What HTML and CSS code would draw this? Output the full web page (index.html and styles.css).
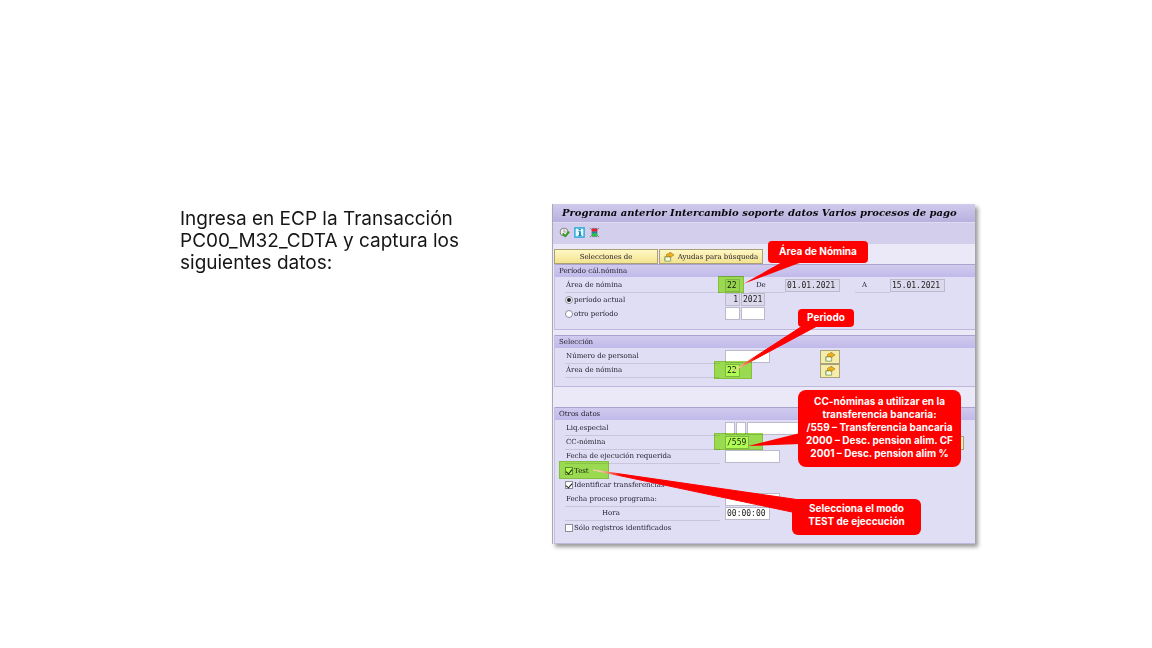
FILE: index.html
```html
<!DOCTYPE html>
<html lang="es">
<head>
<meta charset="utf-8">
<title>Transacción PC00_M32_CDTA</title>
<link rel="stylesheet" href="styles.css">
</head>
<body>
<svg class="defs" width="0" height="0" aria-hidden="true">
  <symbol id="multi" viewBox="0 0 12 12">
    <path d="M1 5.500h7V11H1z" fill="#f4fbe8" stroke="#7f9a55"/>
    <path d="M1 10V7l2-2h3" fill="none" stroke="#74b34a"/>
    <path d="M3 6V3l1-1h3V0l5 3.500L7 7V5H5v1z" fill="#f2b21c" stroke="#9c7420" stroke-width=".7"/>
  </symbol>
</svg>
<main class="slide">
  <p class="intro">Ingresa en ECP la Transacción PC00_M32_CDTA y captura los siguientes datos:</p>
  <section class="panel">
    <h1 class="title">Programa anterior Intercambio soporte datos Varios procesos de pago</h1>
    <div class="toolbar">
      <button class="tool" type="button" aria-label="Ejecutar"><svg viewBox="0 0 12 12"><circle cx="5.500" cy="5.500" r="4.300" fill="#f1f1ee" stroke="#77777b"/><path d="M5.500 2.500v3h3" fill="none" stroke="#88888a" stroke-width=".8"/><path d="M4 7l3 3 4-5" fill="none" stroke="#2f9a24" stroke-width="2"/></svg></button>
      <button class="tool" type="button" aria-label="Información"><svg viewBox="0 0 12 12"><rect x="1" y="1" width="10" height="10" fill="#e9fbff" stroke="#21a6d6" stroke-width="1.500"/><path d="M5 2h2.500v1.500H5zM4.500 4.500h3V9h1v1h-4V9h1V5.500h-1z" fill="#1689c0"/></svg></button>
      <button class="tool" type="button" aria-label="Estado"><svg viewBox="0 0 12 12"><path d="M1 1l2 2M11 1L9 3M1 11l2-2M11 11L9 9" stroke="#77727f"/><path d="M3 1h6v10H3z" fill="#8a8593"/><path d="M3 2h6v3H3z" fill="#f01c2b"/><path d="M3 5h6v2H3z" fill="#1c82a8"/><path d="M3 7h6v3H3z" fill="#20c545"/></svg></button>
    </div>
    <div class="actions">
      <button class="action" type="button">Selecciones de</button>
      <button class="action" type="button"><svg class="glyph"><use href="#multi"/></svg>Ayudas para búsqueda</button>
    </div>

    <section class="group">
      <h2 class="heading">Período cál.nómina</h2>
      <div class="row">
        <label class="label" for="area">Área de nómina</label>
        <div class="fields periods">
          <input class="field two" id="area" value="22" readonly>
          <label class="ruled" for="from">De</label>
          <input class="field date" id="from" value="01.01.2021" readonly>
          <label class="ruled" for="to">A</label>
          <input class="field date" id="to" value="15.01.2021" readonly>
        </div>
      </div>
      <div class="row">
        <label class="choice"><input type="radio" name="period" checked>período actual</label>
        <div class="fields"><input class="field two right" aria-label="Período" value="1" readonly><input class="field year" aria-label="Año" value="2021" readonly></div>
      </div>
      <div class="row">
        <label class="choice"><input type="radio" name="period">otro período</label>
        <div class="fields"><input class="field two" aria-label="Otro período"><input class="field year" aria-label="Otro año"></div>
      </div>
    </section>

    <section class="group">
      <h2 class="heading">Selección</h2>
      <div class="row">
        <label class="label" for="person">Número de personal</label>
        <div class="fields"><input class="field time" id="person"></div>
        <button class="more" type="button" aria-label="Selección múltiple de personal"><svg class="glyph"><use href="#multi"/></svg></button>
      </div>
      <div class="row">
        <label class="label" for="area2">Área de nómina</label>
        <div class="fields"><input class="field two" id="area2" value="22"></div>
        <button class="more" type="button" aria-label="Selección múltiple de área"><svg class="glyph"><use href="#multi"/></svg></button>
      </div>
    </section>

    <section class="group last">
      <h2 class="heading">Otros datos</h2>
      <div class="row">
        <label class="label" for="special">Liq.especial</label>
        <div class="fields"><input class="field one" id="special"><input class="field one" aria-label="Identificador"><input class="field long" aria-label="Fecha especial"></div>
      </div>
      <div class="row">
        <label class="label" for="cc">CC-nómina</label>
        <div class="fields"><input class="field year" id="cc" value="/559"></div>
        <button class="more end" type="button" aria-label="Selección múltiple de CC-nómina"><svg class="glyph"><use href="#multi"/></svg></button>
      </div>
      <div class="row">
        <label class="label" for="due">Fecha de ejecución requerida</label>
        <div class="fields"><input class="field date" id="due"></div>
      </div>
      <div class="checks">
        <label class="choice"><input type="checkbox" checked>Test</label>
        <label class="choice"><input type="checkbox" checked>Identificar transferencias</label>
      </div>
      <div class="row">
        <label class="label" for="run">Fecha proceso programa:</label>
        <div class="fields"><input class="field date" id="run"></div>
      </div>
      <div class="row">
        <label class="label indent" for="hour">Hora</label>
        <div class="fields"><input class="field time" id="hour" value="00:00:00"></div>
      </div>
      <div class="row">
        <label class="choice"><input type="checkbox">Sólo registros identificados</label>
      </div>
    </section>

    <div class="notes">
      <span class="mark mark-area"></span>
      <span class="mark mark-period"></span>
      <span class="mark mark-cc"></span>
      <span class="mark mark-test"></span>
      <svg class="tails" viewBox="0 0 422 340" aria-hidden="true">
        <defs>
          <linearGradient id="t1" gradientUnits="userSpaceOnUse" x1="188" y1="81" x2="206" y2="72"><stop offset="0" stop-color="#ffd0b0"/><stop offset=".4" stop-color="#f00"/></linearGradient>
          <linearGradient id="t2" gradientUnits="userSpaceOnUse" x1="180" y1="166" x2="205" y2="149"><stop offset=".2" stop-color="#f5c29a"/><stop offset=".85" stop-color="#f00"/></linearGradient>
          <linearGradient id="t4" gradientUnits="userSpaceOnUse" x1="40" y1="266" x2="80" y2="272"><stop offset=".2" stop-color="#f5c8a8"/><stop offset=".7" stop-color="#f00"/></linearGradient>
        </defs>
        <path d="M190 80L229 58h20z" fill="url(#t1)"/>
        <path d="M180 167l71-46h15z" fill="url(#t2)" stroke="url(#t2)" stroke-width="1"/>
        <path d="M195 242l52-13v11z" fill="#f00"/>
        <path d="M40 266l207 30-8 12z" fill="url(#t4)" stroke="url(#t4)" stroke-width="1"/>
      </svg>
      <p class="note note-area">Área de Nómina</p>
      <p class="note note-period">Periodo</p>
      <p class="note note-cc">CC-nóminas a utilizar en la<br>transferencia bancaria:<br>/559 – Transferencia bancaria<br>2000 – Desc. pension alim. CF<br>2001 – Desc. pension alim %</p>
      <p class="note note-test">Selecciona el modo<br>TEST de ejeccución</p>
    </div>
  </section>
</main>
</body>
</html>
```
FILE: styles.css
```css
* { box-sizing: border-box; }
body { margin: 0; background: #fff; }
h1, h2, p { margin: 0; }
.defs { position: absolute; }

.slide {
  display: grid;
  grid-template-columns: 372fr 423fr;
  align-items: start;
  padding: 204px 177px 60px 180px;
}
.intro {
  max-width: 290px;
  padding-top: 4px;
  color: #161616;
  font: 19px/22px Inter, sans-serif;
}
.panel {
  position: relative;
  border-left: 1px solid #aaa8b5;
  background: #ebe9f7;
  box-shadow: 3px 3px 4px #9a9a9a;
  color: #24212f;
  font: 7px/13px "DejaVu Serif", serif;
}
.title {
  padding: 0 9px;
  background: linear-gradient(#d0cbec, #b8b1df);
  color: #08080c;
  font: italic bold 10px/18px "DejaVu Serif", serif;
  white-space: nowrap;
}
.toolbar {
  display: flex;
  gap: 4px;
  height: 22px;
  padding: 4px 6px;
  border-top: 1px solid #dedaf2;
  background: #d2ceeb;
}
.tool { width: 11px; height: 11px; padding: 0; border: 0; background: none; }
.tool svg { display: block; width: 11px; height: 11px; }
.actions { display: flex; gap: 1px; padding: 5px 1px 0; }
.action {
  display: flex;
  align-items: center;
  justify-content: center;
  gap: 4px;
  width: 104px;
  height: 15px;
  padding: 0;
  border: 1px solid #aaa179;
  background: linear-gradient(#fff8c4, #f3e38f);
  color: #24212f;
  font: 7px/12px "DejaVu Serif", serif;
  white-space: nowrap;
}
.glyph { width: 10px; height: 10px; }

.group {
  margin-left: 1px;
  padding-bottom: 8px;
  border-left: 1px solid #c4bfe3;
  border-bottom: 1px solid #bdb8dc;
  background: #e0def5;
}
.group + .group { margin-top: 5px; }
.group + .last { margin-top: 20px; padding-bottom: 8px; }
.heading {
  height: 13px;
  margin-bottom: 2px;
  padding-left: 4px;
  border-top: 1px solid #aaa3ce;
  background: linear-gradient(#d0caee, #c1baea);
  font: 7px/12px "DejaVu Serif", serif;
}
.row {
  display: grid;
  grid-template-columns: 160px 95px 1fr;
  height: 14px;
  padding-left: 10px;
}
.label, .ruled { border-bottom: 1px solid #c9c6dc; white-space: nowrap; }
.label { margin-right: 5px; padding-left: 1px; }
.indent { padding-left: 37px; }
.choice { display: flex; align-items: center; gap: 1px; height: 14px; white-space: nowrap; }
.choice input {
  appearance: none;
  display: grid;
  place-items: center;
  width: 8px;
  height: 8px;
  margin: 0;
  border: 1px solid #8f8d9b;
  background: #fff;
}
.choice input[type="radio"] { border-radius: 50%; }
.choice input[type="radio"]:checked::after { content: ""; width: 4px; height: 4px; border-radius: 50%; background: #222; }
.choice input[type="checkbox"]:checked::after { content: ""; width: 3px; height: 5px; border: solid #222; border-width: 0 1px 1px 0; transform: rotate(40deg); }
.checks { padding: 0 0 1px 10px; }
.fields { display: flex; gap: 1px; }
.field {
  width: 15px;
  height: 13px;
  padding: 0 1px;
  border: 1px solid #bcb9ca;
  background: #fff;
  color: #222;
  font: 8px/11px "DejaVu Sans Mono", monospace;
}
.field:read-only { background: #dcd9ee; }
.one { width: 10px; }
.year { width: 24px; }
.time { width: 45px; }
.date { width: 55px; }
.long { width: 90px; flex: none; }
.right { text-align: right; }
.periods { grid-column: 2 / -1; gap: 0; }
.ruled { width: 36px; margin-left: 9px; padding-left: 7px; }
.ruled ~ .ruled { margin-left: 15px; width: 35px; }
.more { width: 20px; height: 14px; padding: 0; border: 1px solid #a9a17c; background: #f7edaa; line-height: 0; }
.end { margin: 0 11px 0 auto; }

.notes { position: absolute; inset: 0; pointer-events: none; }
.tails { position: absolute; top: 0; left: 0; width: 422px; height: 340px; }
.mark { position: absolute; border: 1px solid #97dc42; background: #b0fb53; mix-blend-mode: multiply; }
.mark-area { left: 165px; top: 72px; width: 26px; height: 17px; }
.mark-period { left: 161px; top: 157px; width: 38px; height: 18px; }
.mark-cc { left: 161px; top: 229px; width: 49px; height: 17px; }
.mark-test { left: 6px; top: 257px; width: 50px; height: 18px; }
.note {
  position: absolute;
  display: grid;
  place-content: center;
  padding-bottom: 2px;
  border-radius: 4px;
  background: #f00;
  color: #fff;
  font: bold 10px/13px Inter, sans-serif;
  text-align: center;
  white-space: nowrap;
}
.note-area { left: 215px; top: 37px; width: 100px; height: 22px; }
.note-period { left: 245px; top: 105px; width: 56px; height: 18px; }
.note-cc { left: 245px; top: 186px; width: 163px; height: 77px; border-radius: 8px; }
.note-test { left: 239px; top: 295px; width: 129px; height: 36px; padding-bottom: 4px; border-radius: 6px; }
```
